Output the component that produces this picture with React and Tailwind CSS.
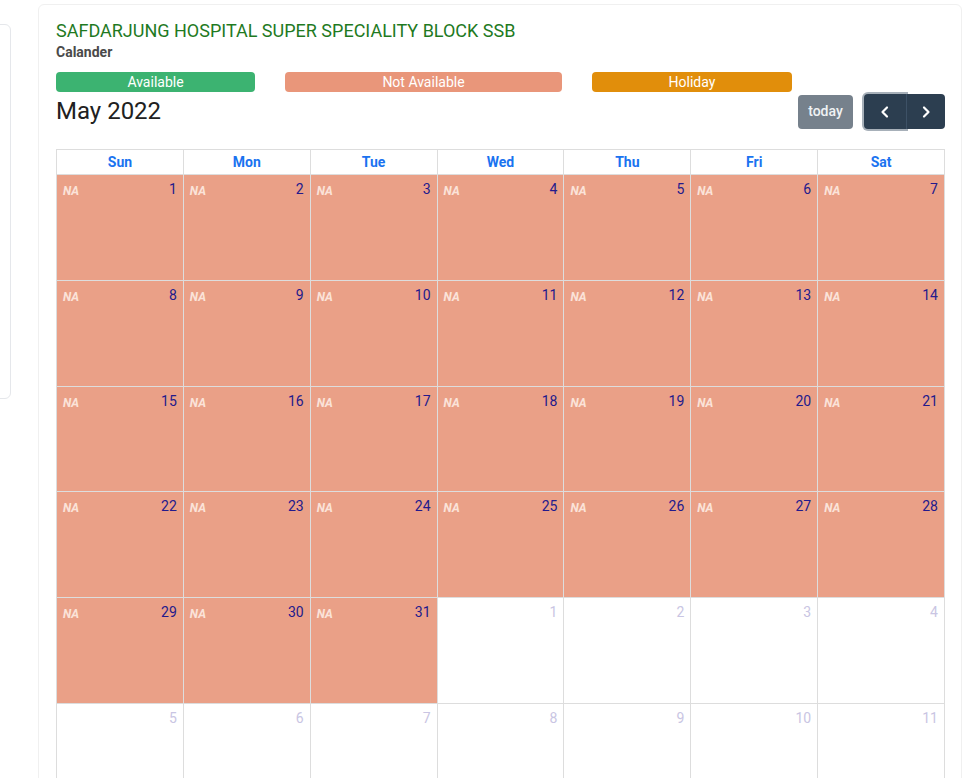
import React from 'react';

const DAYS = ['Sun', 'Mon', 'Tue', 'Wed', 'Thu', 'Fri', 'Sat'];

function buildWeeks() {
  const cells = [];
  for (let d = 1; d <= 31; d++) cells.push({ day: d, na: true });
  for (let d = 1; d <= 11; d++) cells.push({ day: d, na: false, other: true });
  const weeks = [];
  for (let i = 0; i < cells.length; i += 7) weeks.push(cells.slice(i, i + 7));
  return weeks;
}

export default function App() {
  const weeks = buildWeeks();

  return (
    <div className="relative min-h-[778px] w-[966px] overflow-hidden bg-white font-['Roboto','Liberation_Sans',sans-serif]">
      {/* side card peeking in */}
      <div className="absolute left-[-20px] top-[24px] h-[375px] w-[31px] rounded-md border border-gray-200 bg-white" />

      <div className="ml-[38px] mt-[4px] w-[924px] rounded-md border border-[#f0f0f0] bg-white pl-[17px] pr-[16px] pt-[15px]">
        <h1 className="text-[18px] leading-[22px] text-[#1f7a1f]">
          SAFDARJUNG HOSPITAL SUPER SPECIALITY BLOCK SSB
        </h1>
        <p className="mt-[1px] text-[14px] font-bold leading-[18px] text-[#4a4a4a]">Calander</p>

        <div className="mt-[11px] flex h-[20px] items-center text-[14px] text-white">
          <div className="flex h-[20px] w-[199px] items-center justify-center rounded bg-[#3cb371]">Available</div>
          <div className="ml-[30px] flex h-[20px] w-[277px] items-center justify-center rounded bg-[#e9967a]">Not Available</div>
          <div className="ml-[30px] flex h-[20px] w-[200px] items-center justify-center rounded bg-[#e18e0b]">Holiday</div>
        </div>

        <div className="flex items-start justify-between">
          <h2 className="mt-[3px] text-[24px] leading-[32px] text-[#212121]">May 2022</h2>
          <div className="mt-[2px] flex items-center">
            <button type="button" className="h-[34px] w-[55px] rounded bg-[#76818c] text-[14px] font-medium text-[#f0f2f4]">
              today
            </button>
            <div className="ml-[11px] flex h-[35px]">
              <button type="button" className="flex w-[42px] items-center justify-center rounded-l bg-[#2c3e50] text-white ring-2 ring-[#a7b0b9]">
                <svg width="14" height="14" viewBox="0 0 14 14" fill="none" stroke="currentColor" strokeWidth="2.2" strokeLinecap="round" strokeLinejoin="round">
                  <path d="M9 2.5 L4.5 7 L9 11.5" />
                </svg>
              </button>
              <button type="button" className="flex w-[39px] items-center justify-center rounded-r border-l border-[#3d5166] bg-[#2c3e50] text-white">
                <svg width="14" height="14" viewBox="0 0 14 14" fill="none" stroke="currentColor" strokeWidth="2.2" strokeLinecap="round" strokeLinejoin="round">
                  <path d="M5 2.5 L9.5 7 L5 11.5" />
                </svg>
              </button>
            </div>
          </div>
        </div>

        <div className="mt-[20px] w-[889px] border-l border-t border-[#dddddd]">
          <div className="grid grid-cols-7">
            {DAYS.map((d) => (
              <div key={d} className="flex h-[25px] items-center justify-center border-b border-r border-[#dddddd] text-[14px] font-bold text-[#1a73f0]">
                {d}
              </div>
            ))}
          </div>
          {weeks.map((week, wi) => (
            <div key={wi} className="grid grid-cols-7">
              {week.map((c, ci) => (
                <div
                  key={ci}
                  className={
                    c.na
                      ? 'flex h-[105.8px] items-start justify-between border-b border-r border-[#dddddd] bg-[#eaa087] px-[6px] pt-[5px]'
                      : 'flex h-[105.8px] items-start justify-end border-b border-r border-[#dddddd] bg-white px-[6px] pt-[5px]'
                  }
                >
                  {c.na && (
                    <span className="mt-[4px] text-[12px] font-bold italic leading-[14px] text-[#fbe3d9]">NA</span>
                  )}
                  <span className={c.other ? 'text-[14px] leading-[18px] text-[#c9c5e3]' : 'text-[14px] leading-[18px] text-[#231a8c]'}>
                    {c.day}
                  </span>
                </div>
              ))}
            </div>
          ))}
        </div>
      </div>
    </div>
  );
}
